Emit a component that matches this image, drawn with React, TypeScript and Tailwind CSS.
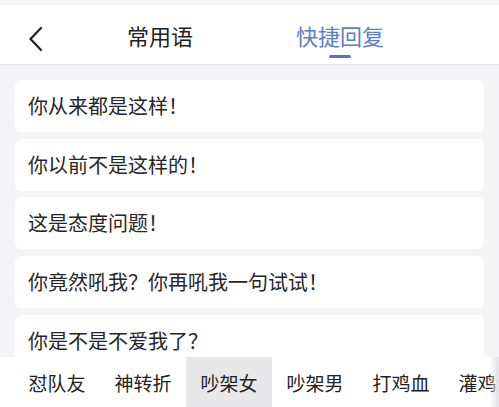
import React, { useState } from 'react';

const phrases = [
  '你从来都是这样！',
  '你以前不是这样的！',
  '这是态度问题！',
  '你竟然吼我？你再吼我一句试试！',
  '你是不是不爱我了？',
  '你就是嫌弃我了！',
];

const categories = ['怼队友', '神转折', '吵架女', '吵架男', '打鸡血', '灌鸡汤'];

export default function App() {
  const [tab, setTab] = useState<'common' | 'quick'>('quick');
  const [category, setCategory] = useState(2);

  return (
    <div
      className="w-[499px] h-[407px] flex flex-col overflow-hidden bg-[#f4f4f6]"
      style={{ fontFamily: '"Noto Sans CJK SC", "Noto Sans", sans-serif' }}
    >
      {/* Header */}
      <div className="mt-[5px] h-[60px] shrink-0 bg-white border-b border-[#e6e6ea] relative flex items-center">
        <button className="absolute left-[24px] top-[17px] w-[24px] h-[34px] flex items-center justify-center">
          <svg width="16" height="26" viewBox="0 0 16 26" fill="none">
            <path d="M13 2 L2.5 13 L13 24" stroke="#1f1f1f" strokeWidth="2.2" strokeLinecap="round" strokeLinejoin="round" />
          </svg>
        </button>
        <div className="flex w-full">
          <button
            onClick={() => setTab('common')}
            className={`ml-[127px] text-[22px] leading-none ${tab === 'common' ? 'text-[#5b7ec6]' : 'text-[#222]'}`}
          >
            常用语
          </button>
          <button
            onClick={() => setTab('quick')}
            className={`ml-[103px] relative text-[22px] leading-none ${tab === 'quick' ? 'text-[#5b7ec6]' : 'text-[#222]'}`}
          >
            快捷回复
            {tab === 'quick' && (
              <span className="absolute left-[33px] top-[31px] w-[22px] h-[3px] rounded-full bg-[#5670d0]" />
            )}
          </button>
        </div>
      </div>

      {/* Phrase list */}
      <div className="flex-1 overflow-hidden px-[15px] pt-[15px] flex flex-col gap-[6.7px]">
        {phrases.map((p) => (
          <div
            key={p}
            className="h-[52px] shrink-0 bg-white rounded-[6px] flex items-center pl-[13px] text-[20px] text-[#262626] leading-none"
          >
            {p}
          </div>
        ))}
      </div>

      {/* Category bar */}
      <div className="h-[50px] shrink-0 bg-white flex pl-[14px] overflow-hidden relative">
        {categories.map((c, i) => (
          <button
            key={c}
            onClick={() => setCategory(i)}
            className={`w-[86px] shrink-0 h-full flex items-center justify-center text-[19px] text-[#222] leading-none ${
              category === i ? 'bg-[#e8e8ea]' : ''
            }`}
          >
            {c}
          </button>
        ))}
        <div className="absolute right-0 top-0 h-full w-[10px] bg-gradient-to-r from-transparent to-[#e2e2e4]" />
      </div>
    </div>
  );
}
